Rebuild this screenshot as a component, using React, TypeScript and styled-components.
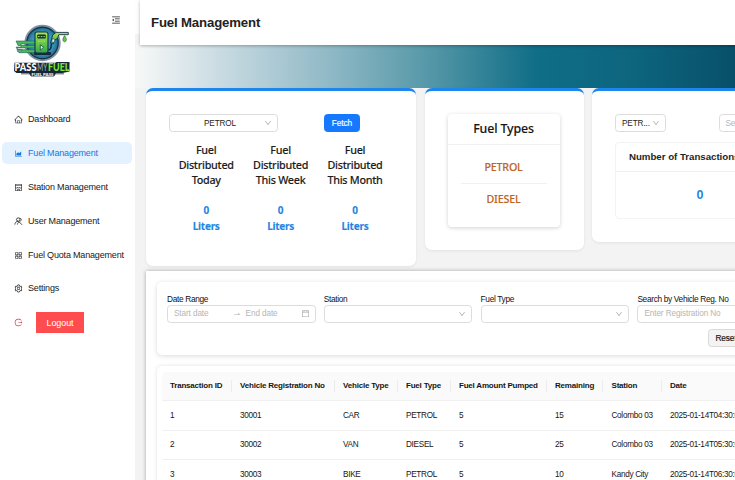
import React from "react";
import styled, { createGlobalStyle } from "styled-components";
import {
  AiOutlineMenuFold,
  AiOutlineHome,
  AiOutlineAreaChart,
  AiOutlineShop,
  AiOutlineAppstore,
  AiOutlineSetting,
  AiOutlineLogout,
  AiOutlineDown,
  AiOutlineSwapRight,
  AiOutlineCalendar,
} from "react-icons/ai";

const Global = createGlobalStyle`
  * { box-sizing: border-box; }
  body {
    margin: 0;
    overflow: hidden;
    background: #f3f3f3;
    font-family: "Liberation Sans", Arial, sans-serif;
    color: #1f1f1f;
  }
`;

const Page = styled.div`
  display: flex;
  width: 735px;
  height: 480px;
  overflow: hidden;
`;

const Sidebar = styled.aside`
  flex: 0 0 135px;
  background: #fff;
  display: flex;
  flex-direction: column;
`;

const Brand = styled.div`
  display: flex;
  justify-content: space-between;
  height: 102px;
  padding: 14.5px 14.5px 0 12px;
  > svg:last-child { color: #222; }
`;

const LogoArt = styled.svg`
  display: block;
  margin-top: 6.5px;
`;

const Nav = styled.nav`
  display: flex;
  flex-direction: column;
  gap: 12px;
  padding: 6.6px 3px 0 2px;
`;

const NavItem = styled.a<{ $active?: boolean }>`
  display: flex;
  align-items: center;
  height: 21.9px;
  padding-left: 12px;
  gap: 5px;
  border-radius: 5px;
  white-space: nowrap;
  font-size: 9px;
  line-height: 11px;
  letter-spacing: -0.18px;
  color: ${(p) => (p.$active ? "#1677e0" : "#202020")};
  background: ${(p) => (p.$active ? "#e4f2ff" : "transparent")};
  svg { flex: none; }
`;

const LogoutRow = styled.div`
  display: flex;
  align-items: center;
  gap: 13px;
  padding-left: 12px;
  color: #d9283a;
`;

const LogoutButton = styled.button`
  width: 48px;
  height: 21.5px;
  border: 0;
  padding: 0;
  background: #ff4d4f;
  color: #fff;
  font: 9px "Liberation Sans", Arial, sans-serif;
  letter-spacing: -0.1px;
`;

const Main = styled.main`
  flex: 0 0 640px;
  display: flex;
  flex-direction: column;
  background: linear-gradient(#fdfdfd 0 34px, #f3f3f3 34px);
`;

const Header = styled.header`
  flex: 0 0 45px;
  margin-left: 5px;
  padding: 0 0 1px 11px;
  display: flex;
  align-items: center;
  background: #fff;
  box-shadow: 0 1px 3px rgba(0, 0, 0, 0.28);
  z-index: 1;
`;

const Title = styled.h1`
  margin: 0;
  font-size: 13.2px;
  letter-spacing: -0.15px;
  font-weight: 700;
  color: #222;
`;

const Band = styled.div`
  flex: 0 0 43px;
  background: linear-gradient(90deg, #f5f7f7 5px, #c9dbe2 85px, #92bac7 190px, #5899a9 290px, #106e87 400px, #0d647d 500px, #08506a 600px);
`;

const Cards = styled.section`
  display: flex;
  align-items: flex-start;
  gap: 8.5px;
  flex: 0 0 183px;
  padding-left: 11px;
`;

const Card = styled.div<{ $w: number; $h: number }>`
  flex: 0 0 ${(p) => p.$w}px;
  height: ${(p) => p.$h}px;
  padding: 23px 23px 0;
  background: #fff;
  border-top: 3px solid #1c86ec;
  border-radius: 7px;
  box-shadow: 0 1px 3px rgba(0, 0, 0, 0.07);
`;

const ControlRow = styled.div<{ $gap: number }>`
  display: flex;
  gap: ${(p) => p.$gap}px;
`;

const Field = styled.div<{ $w: number; $center?: boolean; $muted?: boolean }>`
  flex: none;
  display: flex;
  align-items: center;
  width: ${(p) => p.$w}px;
  height: 18px;
  padding: 0 5px 0 6px;
  border: 1px solid #dcdcdc;
  border-radius: 3.5px;
  background: #fff;
  white-space: nowrap;
  font-size: 8.2px;
  letter-spacing: -0.1px;
  color: ${(p) => (p.$muted ? "#b5b5b5" : "#262626")};
  svg { flex: none; color: #a8a8a8; }
  > span { flex: 1; text-align: ${(p) => (p.$center ? "center" : "left")}; }
`;

const Button = styled.button<{ $primary?: boolean }>`
  flex: none;
  width: 36px;
  height: 18px;
  padding: 0;
  border: 1px solid ${(p) => (p.$primary ? "#1677ff" : "#d9d9d9")};
  border-radius: 3.5px;
  background: ${(p) => (p.$primary ? "#1677ff" : "#f3f3f3")};
  color: ${(p) => (p.$primary ? "#fff" : "#111")};
  font: 8.3px "Liberation Sans", Arial, sans-serif;
  letter-spacing: -0.1px;
  -webkit-text-stroke: 0.15px currentColor;
`;

const Stats = styled.div`
  display: grid;
  grid-template-columns: repeat(3, 74.4px);
  margin-top: 10px;
`;

const Stat = styled.div`
  text-align: center;
  font-family: "Noto Sans", sans-serif;
  font-size: 10.8px;
  letter-spacing: -0.28px;
  font-weight: 500;
  line-height: 15.1px;
  color: #1c1c1c;
  -webkit-text-stroke: 0.12px currentColor;
`;

const StatValue = styled.div`
  margin-top: 15px;
  font-size: 10px;
  letter-spacing: -0.25px;
  font-weight: 700;
  line-height: 16px;
  color: #1f86e3;
`;

const TypesCard = styled.div`
  height: 113px;
  width: 112px;
  border-radius: 4px;
  box-shadow: 0 1px 4px rgba(0, 0, 0, 0.18);
  text-align: center;
  font-family: "Noto Sans", sans-serif;
  font-weight: 500;
  -webkit-text-stroke: 0.12px currentColor;
`;

const TypesTitle = styled.div`
  height: 31px;
  line-height: 29px;
  font-size: 12.4px;
  letter-spacing: -0.15px;
  border-bottom: 1px solid #f0f0f0;
  color: #161616;
`;

const TypeName = styled.div`
  height: 30.7px;
  margin: 0 13px;
  line-height: 31px;
  font-size: 10.7px;
  letter-spacing: -0.18px;
  color: #bd6420;
  & + & { border-top: 1px solid #f0f0f0; }
`;

const TypeList = styled.div`
  padding-top: 7px;
`;

const CountCard = styled.div`
  width: 170px;
  height: 77px;
  margin-top: 10px;
  border: 1px solid #f3f3f3;
  border-radius: 4px;
`;

const CountTitle = styled.div`
  height: 29px;
  padding-left: 13px;
  line-height: 28px;
  white-space: nowrap;
  font-size: 9.7px;
  letter-spacing: -0.02px;
  font-weight: 700;
  border-bottom: 1px solid #f0f0f0;
`;

const Count = styled.div`
  line-height: 46px;
  text-align: center;
  font-size: 12.5px;
  font-weight: 700;
  color: #1f86e3;
`;

const Panel = styled.section`
  flex: 0 0 260px;
  margin-left: 11px;
  padding: 11px 0 0 10.5px;
  display: flex;
  flex-direction: column;
  gap: 11px;
  background: #fff;
  box-shadow: 0 0 4px rgba(0, 0, 0, 0.32);
`;

const Filters = styled.div`
  flex: 0 0 73px;
  padding: 11.5px 0 0 10.5px;
  border-radius: 5px;
  box-shadow: 0 1px 5px rgba(0, 0, 0, 0.15);
`;

const FilterRow = styled.div`
  display: flex;
  gap: 8.3px;
`;

const Label = styled.label`
  display: block;
  height: 11px;
  line-height: 11px;
  white-space: nowrap;
  font-size: 8.3px;
  letter-spacing: -0.32px;
  color: #111;
`;

const ResetRow = styled.div`
  padding: 4.5px 0 0 541px;
`;

const TableCard = styled.div`
  flex: 0 0 130px;
  padding: 5.5px 5px;
  border-radius: 5px;
  box-shadow: 0 0 4px rgba(0, 0, 0, 0.12);
`;

const Row = styled.div<{ $head?: boolean }>`
  display: grid;
  grid-template-columns: 70px 103px 63px 53px 96px 56.5px 58.5px 130px;
  align-items: center;
  height: 29.5px;
  padding-top: 1px;
  border-bottom: 1px solid #f0f0f0;
  border-radius: ${(p) => (p.$head ? "4px 4px 0 0" : "0")};
  background: ${(p) => (p.$head ? "#fafafa" : "#fff")};
  font-size: ${(p) => (p.$head ? "8px" : "8.2px")};
  letter-spacing: ${(p) => (p.$head ? "-0.2px" : "-0.3px")};
  font-weight: ${(p) => (p.$head ? 700 : 400)};
  color: #161616;
`;

const Cell = styled.div<{ $divided?: boolean }>`
  height: 12px;
  line-height: 12px;
  padding-left: 8.5px;
  white-space: nowrap;
  border-right: 1px solid ${(p) => (p.$divided ? "#ececec" : "transparent")};
`;

const Logo = () => (
  <LogoArt width="60" height="56" viewBox="12 21 60 56">
    <defs>
      <radialGradient id="disc">
        <stop offset="0" stopColor="#3eb5d8" />
        <stop offset="0.65" stopColor="#3293b5" />
        <stop offset="1" stopColor="#24577a" />
      </radialGradient>
      <linearGradient id="lime" x2="0" y2="1">
        <stop stopColor="#a8e84b" />
        <stop offset="1" stopColor="#31a84b" />
      </linearGradient>
    </defs>
    <circle cx="42.5" cy="43" r="17.3" fill="url(#disc)" stroke="#8193a0" strokeWidth="1.8" />
    <circle cx="42.5" cy="43" r="15.6" fill="none" stroke="#173149" strokeWidth="1.1" />
    <path d="M16 41h19v3H21v1.5h14v2.4H17v1.8h18v3H19l-2-2h5v-1.2h-4l-2-2.4h5v-1.6h-3z" fill="#48b95b" stroke="#1f6255" strokeWidth=".6" />
    <rect x="34" y="52" width="17" height="3" rx="1" fill="#15293b" />
    <rect x="35" y="32" width="13" height="21" rx="2" fill="url(#lime)" stroke="#173149" strokeWidth="1.1" />
    <rect x="37.3" y="34.5" width="8.4" height="4" rx=".7" fill="#142c3a" />
    <path d="M38 36.6h1.7m1 0h1.7m1 0h1.5M38 41.2h1.5m1.3 0h1.5m1.2 0H45" stroke="#b1eb75" strokeWidth=".9" />
    <path d="M40.3 44.8l3.3 2.4-3.3 3z" fill="#eafbda" stroke="#17443b" strokeWidth=".8" />
    <path d="M48.5 50c4.5-1 1.2-6 4.2-10" fill="none" stroke="#142c3a" strokeWidth="1.5" />
    <path d="M50.5 43l2.2-8 3.4-2.6h12.2v2.3h-9.5l-1.1 3.4-3.2 2.2-1.4 3.7z" fill="url(#lime)" stroke="#173149" strokeWidth=".9" />
    <path d="M52.5 38.5l2.5 1-1 3.2-2.4-.8z" fill="#e3f4e9" stroke="#173149" strokeWidth=".6" />
    <path d="M64.6 35.6q3.6 5.2 0 6.3-3.6-1.1 0-6.3z" fill="#68c843" stroke="#226039" strokeWidth=".6" />
    <path d="M14.5 62.8h41l1-.8h13v9.5l-7 1.5h-46l-2.500-2z" fill="#17273a" />
    <path d="M21 73.8h43M29 72h27l-2 4H31z" fill="#17273a" stroke="#17273a" strokeWidth=".8" />
    <g fontFamily="Lato, sans-serif" fontWeight="900" fontSize="10.5">
      <text x="14.5" y="70.8" textLength="22" lengthAdjust="spacingAndGlyphs" fill="#fff">PASS</text>
      <text x="37.2" y="70.8" textLength="10" lengthAdjust="spacingAndGlyphs" fill="#a3bcc6" fontWeight="400">MY</text>
      <text x="48" y="70.8" textLength="21.5" lengthAdjust="spacingAndGlyphs" fill="#7ee536">FUEL</text>
    </g>
    <text x="31.5" y="75.5" textLength="22" lengthAdjust="spacingAndGlyphs" fontFamily="Lato, sans-serif" fontWeight="900" fontSize="3.8" fill="#fff">FUEL PASS</text>
  </LogoArt>
);

const UserIcon = () => (
  <svg width="9" height="9" viewBox="0 0 16 16" fill="none" stroke="currentColor" strokeWidth="1.4">
    <circle cx="7.5" cy="4.5" r="3" />
    <path d="M1.5 13.5c.3-3.5 2.5-6 6-6M10 2c3.5.2 4 4.5 1 5.5M6 13.5c.3-3 2-4.500 4-4.500M8 7.500l6.500 6.500" />
  </svg>
);

const navItems = [
  { label: "Dashboard", icon: <AiOutlineHome size={9} /> },
  { label: "Fuel Management", icon: <AiOutlineAreaChart size={9} />, active: true },
  { label: "Station Management", icon: <AiOutlineShop size={9} /> },
  { label: "User Management", icon: <UserIcon /> },
  { label: "Fuel Quota Management", icon: <AiOutlineAppstore size={9} /> },
  { label: "Settings", icon: <AiOutlineSetting size={9} /> },
];

const periods = ["Today", "This Week", "This Month"];

const columns = ["Transaction ID", "Vehicle Registration No", "Vehicle Type", "Fuel Type", "Fuel Amount Pumped", "Remaining", "Station", "Date"];

const rows = [
  ["1", "30001", "CAR", "PETROL", "5", "15", "Colombo 03", "2025-01-14T04:30:00"],
  ["2", "30002", "VAN", "DIESEL", "5", "25", "Colombo 03", "2025-01-14T05:30:00"],
  ["3", "30003", "BIKE", "PETROL", "5", "10", "Kandy City", "2025-01-14T06:30:00"],
];

export default function App() {
  return (
    <Page>
      <Global />
      <Sidebar>
        <Brand>
          <Logo />
          <AiOutlineMenuFold size={10} />
        </Brand>
        <Nav>
          {navItems.map((n) => (
            <NavItem key={n.label} $active={n.active}>
              {n.icon}
              {n.label}
            </NavItem>
          ))}
          <LogoutRow>
            <AiOutlineLogout size={9} />
            <LogoutButton>Logout</LogoutButton>
          </LogoutRow>
        </Nav>
      </Sidebar>
      <Main>
        <Header>
          <Title>Fuel Management</Title>
        </Header>
        <Band />
        <Cards>
          <Card $w={270} $h={177.5}>
            <ControlRow $gap={46}>
              <Field $w={109} $center>
                <span>PETROL</span>
                <AiOutlineDown size={8} />
              </Field>
              <Button $primary>Fetch</Button>
            </ControlRow>
            <Stats>
              {periods.map((p) => (
                <Stat key={p}>
                  Fuel
                  <br />
                  Distributed
                  <br />
                  {p}
                  <StatValue>
                    0<br />
                    Liters
                  </StatValue>
                </Stat>
              ))}
            </Stats>
          </Card>
          <Card $w={159} $h={162}>
            <TypesCard>
              <TypesTitle>Fuel Types</TypesTitle>
              <TypeList>
                <TypeName>PETROL</TypeName>
                <TypeName>DIESEL</TypeName>
              </TypeList>
            </TypesCard>
          </Card>
          <Card $w={216} $h={153.5}>
            <ControlRow $gap={53}>
              <Field $w={50.5}>
                <span>PETR...</span>
                <AiOutlineDown size={8} />
              </Field>
              <Field $w={70} $muted>
                <span>Select date</span>
              </Field>
            </ControlRow>
            <CountCard>
              <CountTitle>Number of Transactions</CountTitle>
              <Count>0</Count>
            </CountCard>
          </Card>
        </Cards>
        <Panel>
          <Filters>
            <FilterRow>
              <div>
                <Label>Date Range</Label>
                <Field $w={148.5} $muted>
                  <span>Start date</span>
                  <AiOutlineSwapRight size={8} />
                  <span>&nbsp;&nbsp;End date</span>
                  <AiOutlineCalendar size={9} />
                </Field>
              </div>
              <div>
                <Label>Station</Label>
                <Field $w={148.5}>
                  <span />
                  <AiOutlineDown size={8} />
                </Field>
              </div>
              <div>
                <Label>Fuel Type</Label>
                <Field $w={148.5}>
                  <span />
                  <AiOutlineDown size={8} />
                </Field>
              </div>
              <div>
                <Label>Search by Vehicle Reg. No</Label>
                <Field $w={148.5} $muted>
                  <span>Enter Registration No</span>
                </Field>
              </div>
            </FilterRow>
            <ResetRow>
              <Button>Reset</Button>
            </ResetRow>
          </Filters>
          <TableCard>
            <Row $head>
              {columns.map((c, i) => (
                <Cell key={c} $divided={i < columns.length - 1}>
                  {c}
                </Cell>
              ))}
            </Row>
            {rows.map((r) => (
              <Row key={r[0]}>
                {r.map((v, i) => (
                  <Cell key={i}>{v}</Cell>
                ))}
              </Row>
            ))}
          </TableCard>
        </Panel>
      </Main>
    </Page>
  );
}
